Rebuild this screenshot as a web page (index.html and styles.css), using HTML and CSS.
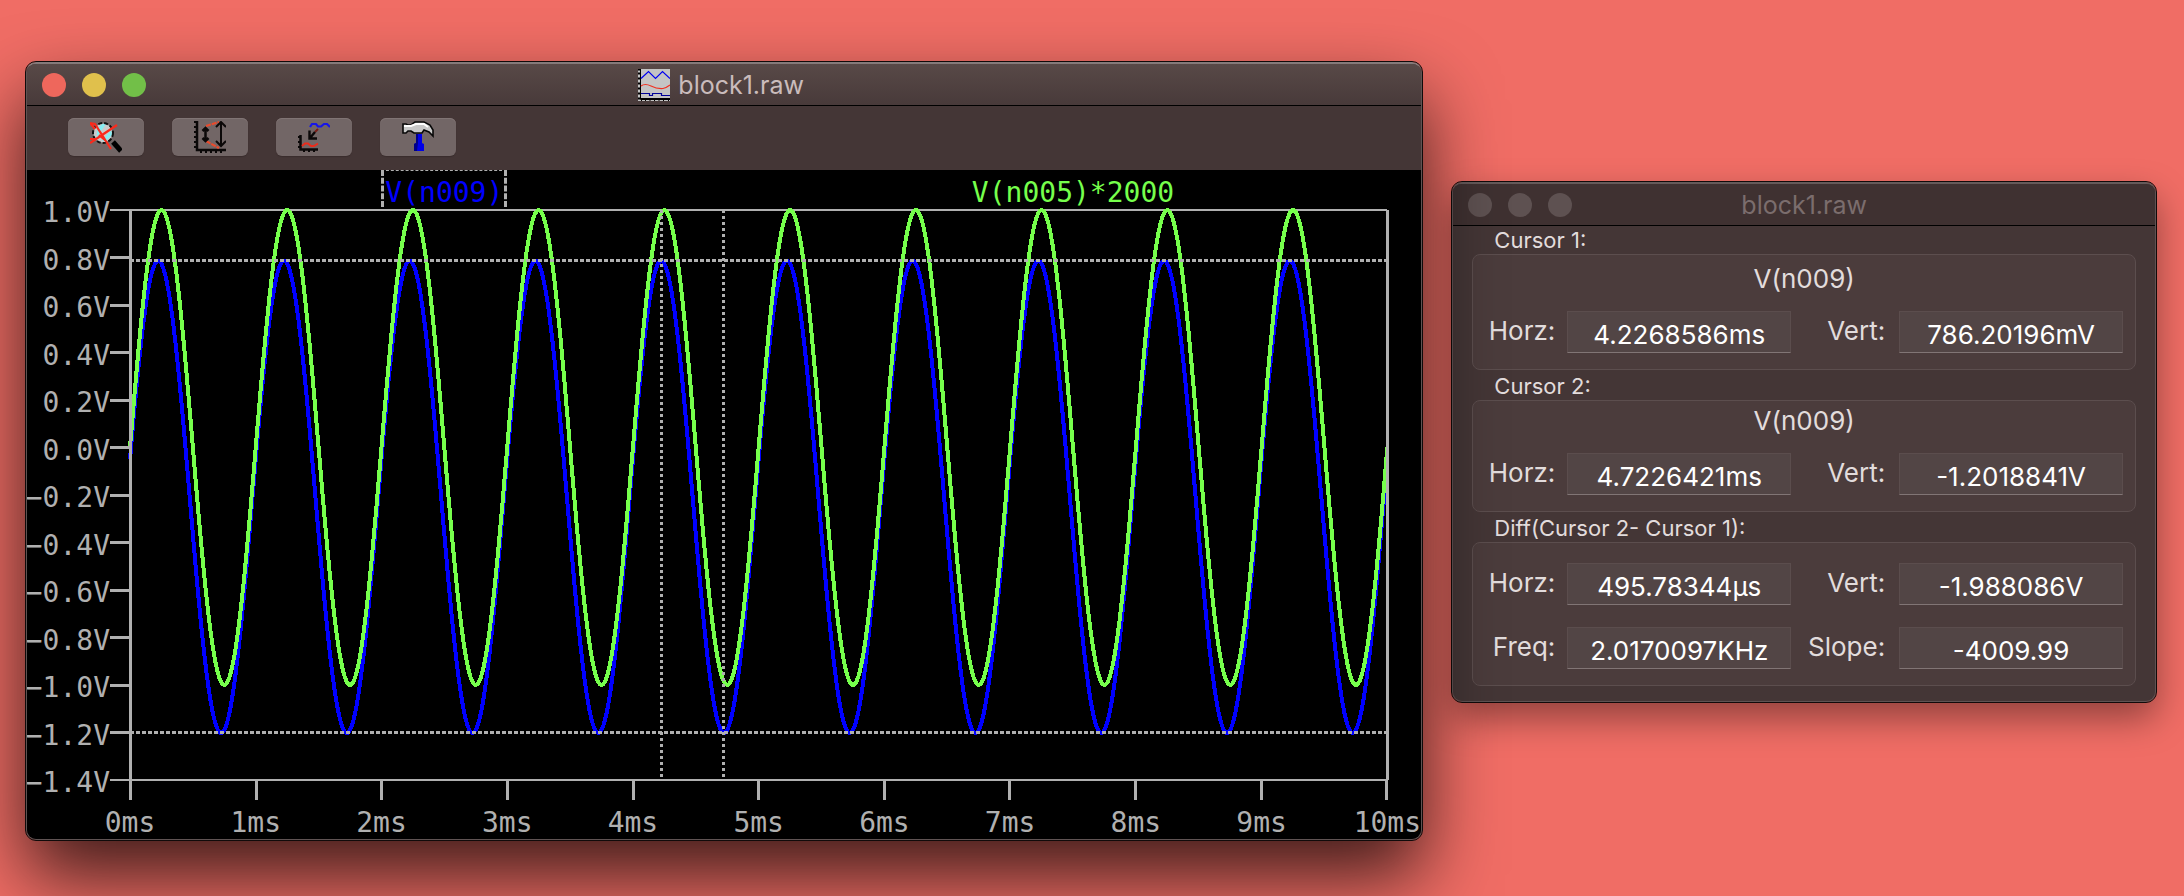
FILE: index.html
```html
<!DOCTYPE html>
<html lang="en">
<head>
<meta charset="utf-8">
<title>block1.raw</title>
<link rel="stylesheet" href="styles.css">
</head>
<body class="desktop">

<main class="window window-active">
  <header class="titlebar">
    <div class="lights">
      <button class="light light-close" aria-label="Close"></button>
      <button class="light light-min" aria-label="Minimize"></button>
      <button class="light light-zoom" aria-label="Zoom"></button>
    </div>
    <h1 class="title">
      <svg class="doc-icon" viewBox="0 0 32 32" aria-hidden="true">
        <rect width="32" height="32" fill="#c4c4c4"/>
        <path d="M2.5 0V30.5H32" fill="none" stroke="#000"/>
        <path d="M0 .5H2M0 4.5H2M0 9.5H2M0 14.5H2M0 19.5H2M0 24.5H2M0 29.5H2" stroke="#000" stroke-width="2"/>
        <path d="M2 29.5H32" stroke="#000"/>
        <path d="M3.500 30V32M7.500 30V32M12 30V32M16.500 30V32M21 30V32M25.500 30V32M30.500 30V32" stroke="#000"/>
        <path d="M3 9.500L10.500 2.500L17.500 9.500L24.500 2.500L32 9.500" fill="none" stroke="#0000f0" stroke-width="1.200"/>
        <path d="M3 17Q7 14 13 17T25 19.500Q28 19 32 16" fill="none" stroke="#f03020" stroke-width="1.200"/>
        <path d="M3 24.500H11.500V26.500H14.500V24.500H23.500V26.500H32" fill="none" stroke="#000098" stroke-width="1.200"/>
      </svg>
      block1.raw
    </h1>
  </header>

  <nav class="toolbar">
    <button class="tool" aria-label="Reset zoom">
      <svg class="tool-icon" viewBox="0 0 32 32" aria-hidden="true">
        <circle cx="13" cy="12" r="9.500" fill="#c9cccc"/>
        <path d="M7 8L12 3H16L7 16ZM12 20L21 9L22 14L16 20Z" fill="#86eef2"/>
        <circle cx="13" cy="12" r="10" fill="none" stroke="#111" stroke-width="2" stroke-dasharray="4 2"/>
        <path d="M23 21L31 30" stroke="#000" stroke-width="5"/>
        <path d="M0 2L5 3L21 28M0 2L5 8M0 22L12 14L27 4M0 18L6 18M9 14L16 20" fill="none" stroke="#fa2a1c" stroke-width="2.200"/>
      </svg>
    </button>
    <button class="tool" aria-label="Autorange">
      <svg class="tool-icon" viewBox="0 0 32 32" aria-hidden="true">
        <path d="M3 0V29H32" fill="none" stroke="#0b0808" stroke-width="2.500"/>
        <path d="M0 1H3M0 6H3M0 11H3M0 16H3M0 21H3M0 26H3M7 29V32M12 29V32M17 29V32M22 29V32M27 29V32" stroke="#0b0808" stroke-width="2"/>
        <path d="M12 5L25 1M12 20L25 27" fill="none" stroke="#ea4a2c" stroke-width="2.200" stroke-dasharray="5 1"/>
        <path d="M11.500 7V20M8.500 10L11.500 7L14.500 10M8.500 17L11.500 20L14.500 17" fill="none" stroke="#0b0808" stroke-width="2.500"/>
        <path d="M27 1V25M22 6L27 1L32 6M22 20L27 25L32 20" fill="none" stroke="#0b0808" stroke-width="2"/>
      </svg>
    </button>
    <button class="tool" aria-label="Add trace">
      <svg class="tool-icon" viewBox="0 0 32 32" aria-hidden="true">
        <path d="M12 6L14 3H18L20 5.500H23L26 3H29L32 6" fill="none" stroke="#1616e8" stroke-width="2.200"/>
        <path d="M20 8L17 11" stroke="#7a1c16" stroke-width="2"/>
        <path d="M17 11L12 17M11.500 9.500V17.500H19" fill="none" stroke="#0b0808" stroke-width="2.400"/>
        <path d="M2.500 14V28.500H20" fill="none" stroke="#0b0808" stroke-width="2.500"/>
        <path d="M0 16H3M0 21H3M0 26H3M6 28V31M11 28V31M16 28V31" stroke="#0b0808" stroke-width="2"/>
        <path d="M4 25L7 22.500H10L13 25H16L20 22.500" fill="none" stroke="#ea2c1c" stroke-width="2"/>
      </svg>
    </button>
    <button class="tool" aria-label="Control panel">
      <svg class="tool-icon" viewBox="0 0 32 32" aria-hidden="true">
        <path d="M1 3H4L6 4H9L13 1H22L28 4L31 9V15L27 11L22 9L20 12H12L9 10H6L4 12H1Z" fill="#c8c8c8" stroke="#080808" stroke-width="1.600"/>
        <path d="M2 5H9L14 3H22L26 6" fill="none" stroke="#fff" stroke-width="2"/>
        <path d="M14 13H20V22L22 23V30H12V23L14 22Z" fill="#0000e8"/>
        <path d="M14 13H16V22L15 30H12V23L14 22Z" fill="#000088"/>
      </svg>
    </button>
  </nav>

  <section class="plot" aria-label="Waveform plot">
    <div class="trace-names">
      <span class="trace-name trace-name-blue">V(n009)</span>
      <span class="trace-name trace-name-green">V(n005)*2000</span>
    </div>
    <ol class="y-labels">
      <li>1.0V</li><li>0.8V</li><li>0.6V</li><li>0.4V</li><li>0.2V</li><li>0.0V</li>
      <li>−0.2V</li><li>−0.4V</li><li>−0.6V</li><li>−0.8V</li><li>−1.0V</li><li>−1.2V</li><li>−1.4V</li>
    </ol>
    <svg class="chart" id="chart" viewBox="0 0 1000 2400" preserveAspectRatio="none" role="img" aria-label="Two sine traces over ten milliseconds">
      <path class="trace trace-blue" id="trace-blue"/>
      <path class="rule" id="rule" d="M0 0H1000M0 2400H1000"/>
      <path class="trace trace-green" id="trace-green"/>
      <path class="axis" id="axis" d="M0 0V2400M1000 0V2400"/>
      <path class="cursor-h" d="M0 214H1000M0 2202H1000"/>
      <path class="cursor-v" d="M422.700 0V2400M472.300 0V2400"/>
    </svg>
    <div class="x-ticks"><i></i><i></i><i></i><i></i><i></i><i></i><i></i><i></i><i></i><i></i><i></i></div>
    <ol class="x-labels">
      <li>0ms</li><li>1ms</li><li>2ms</li><li>3ms</li><li>4ms</li><li>5ms</li><li>6ms</li><li>7ms</li><li>8ms</li><li>9ms</li><li>10ms</li>
    </ol>
  </section>
</main>

<aside class="window window-inactive">
  <header class="titlebar">
    <div class="lights">
      <button class="light" aria-label="Close"></button>
      <button class="light" aria-label="Minimize"></button>
      <button class="light" aria-label="Zoom"></button>
    </div>
    <h2 class="title">block1.raw</h2>
  </header>
  <form class="cursors">
    <h3 class="group-label">Cursor 1:</h3>
    <div class="group group-first">
      <p class="signal">V(n009)</p>
      <div class="fields">
        <label class="label" for="h1">Horz:</label><input class="value" id="h1" value="4.2268586ms">
        <label class="label label-right" for="v1">Vert:</label><input class="value" id="v1" value="786.20196mV">
      </div>
    </div>
    <h3 class="group-label">Cursor 2:</h3>
    <div class="group">
      <p class="signal">V(n009)</p>
      <div class="fields">
        <label class="label" for="h2">Horz:</label><input class="value" id="h2" value="4.7226421ms">
        <label class="label label-right" for="v2">Vert:</label><input class="value" id="v2" value="-1.2018841V">
      </div>
    </div>
    <h3 class="group-label">Diff(Cursor 2- Cursor 1):</h3>
    <div class="group group-diff">
      <div class="fields">
        <label class="label" for="hd">Horz:</label><input class="value" id="hd" value="495.78344µs">
        <label class="label label-right" for="vd">Vert:</label><input class="value" id="vd" value="-1.988086V">
        <label class="label" for="fd">Freq:</label><input class="value" id="fd" value="2.0170097KHz">
        <label class="label label-right" for="sd">Slope:</label><input class="value" id="sd" value="-4009.99">
      </div>
    </div>
  </form>
</aside>

<script src="plot.js"></script>
</body>
</html>
```

FILE: styles.css
```css
* {
  box-sizing: border-box;
}

.desktop {
  display: flex;
  gap: 30px;
  height: 100vh;
  min-height: 760px;
  margin: 0;
  padding: 62px 28px 56px 26px;
  overflow: hidden;
  background: #f06d65;
  color: #e2dcdc;
  font-family: Inter, "Liberation Sans", sans-serif;
  font-size: 26px;
}

.window {
  display: flex;
  flex-direction: column;
  border: 1px solid #5f5353;
  border-top: 2px solid #857a7a;
  border-radius: 10px;
  outline: 1px solid #100a0a;
  overflow: hidden;
}

.window-active {
  position: relative;
  z-index: 1;
  flex: 1397 1 0;
  background: #443636;
  box-shadow: 0 36px 76px rgba(0, 0, 0, 0.75);
}

.window-inactive {
  flex: 703 1 0;
  align-self: flex-start;
  margin-top: 120px;
  border-top-color: #655a5a;
  background: #443636;
  box-shadow: 0 16px 36px rgba(0, 0, 0, 0.4);
}

.titlebar {
  display: grid;
  flex: none;
  grid-template-columns: 1fr auto 1fr;
  align-items: center;
  height: 42px;
  padding: 0 15px;
  border-bottom: 1px solid #000;
  background: linear-gradient(#584947, #483a3a);
}

.window-inactive .titlebar {
  background: #3f3131;
}

.lights {
  display: flex;
  gap: 16px;
}

.light {
  width: 24px;
  height: 24px;
  padding: 0;
  border: 0;
  border-radius: 50%;
  background: #5e5151;
}

.light-close {
  background: #ee675c;
}

.light-min {
  background: #e0c04c;
}

.light-zoom {
  background: #72bf48;
}

.title {
  display: flex;
  align-items: center;
  gap: 8px;
  margin: 0;
  color: #cabcbc;
  font-size: 25px;
  font-weight: 400;
}

.window-active .title {
  padding-right: 6px;
}

.window-inactive .title {
  color: #7b6d6d;
}

.doc-icon {
  width: 32px;
  height: 32px;
}

.toolbar {
  display: flex;
  flex: none;
  gap: 28px;
  height: 64px;
  padding: 12px 41px;
}

.tool {
  width: 76px;
  height: 38px;
  padding: 3px 22px;
  border: 0;
  border-radius: 6px;
  background: #726666;
  box-shadow: 0 1px 1px #3a2d2d, inset 0 1px 0 #807474;
}

.tool-icon {
  display: block;
  width: 32px;
  height: 32px;
}

.plot {
  display: grid;
  flex: 1;
  min-height: 0;
  grid-template-columns: 103px 1fr 34px;
  grid-template-rows: 40px minmax(0, 1fr) 20px 39px;
  background: #000;
  color: #b0b0b0;
  font-family: "DejaVu Sans Mono", "Liberation Mono", monospace;
  font-size: 28px;
  line-height: 32px;
}

.trace-names {
  display: grid;
  grid-column: 2;
  grid-template-columns: 1fr 1fr;
  justify-items: center;
  align-items: start;
}

.trace-name {
  height: 37px;
  padding: 6px 1px 0;
  border: 0 dashed #b0b0b0;
}

.trace-name-blue {
  border-width: 1px 3px 0;
  color: #0000ff;
}

.trace-name-green {
  border-top: 1px solid transparent;
  color: #76ff4c;
}

.y-labels,
.x-labels {
  display: flex;
  justify-content: space-between;
  margin: 0;
  padding: 0;
  list-style: none;
}

.y-labels {
  flex-direction: column;
  grid-row: 2;
  grid-column: 1;
  align-items: flex-end;
  margin: -13px 20px -19px 0;
}

.y-labels li {
  white-space: nowrap;
}

.chart {
  grid-row: 2;
  grid-column: 2;
  width: 100%;
  height: 100%;
  min-height: 0;
  overflow: visible;
  shape-rendering: crispEdges;
}

.chart path {
  fill: none;
  stroke: #b0b0b0;
  vector-effect: non-scaling-stroke;
}

.chart .rule {
  stroke-width: 2px;
}

.chart .axis {
  stroke-width: 3px;
}

.chart .trace {
  stroke-width: 4px;
}

.chart .trace-blue {
  stroke: #0000ff;
}

.chart .trace-green {
  stroke: #76ff4c;
}

.chart .cursor-h {
  stroke-width: 3px;
  stroke-dasharray: 4 2;
}

.chart .cursor-v {
  stroke-width: 3px;
  stroke-dasharray: 3 3;
}

.x-ticks {
  display: flex;
  grid-row: 3;
  grid-column: 2;
  justify-content: space-between;
  margin: 0 -1px;
}

.x-ticks i {
  width: 3px;
  background: #b0b0b0;
}

.x-labels {
  grid-row: 4;
  grid-column: 2;
  margin: 7px 0 0;
}

.x-labels li {
  display: flex;
  justify-content: center;
  width: 0;
}

.cursors {
  display: flex;
  flex-direction: column;
  padding: 0 19px 15px;
}

.group-label {
  margin: 2px 0 0;
  padding-left: 22px;
  font-size: 22px;
  font-weight: 400;
  line-height: 28px;
}

.group-label:first-child {
  margin-top: 0;
}

.group {
  padding: 0 12px 16px 0;
  border: 1px solid #5c4e4e;
  border-radius: 8px;
  background: #4b3c3c;
}

.group-first {
  padding-top: 4px;
}

.group-diff {
  padding-top: 20px;
}

.signal {
  margin: 0;
  padding: 3px 0 15px 12px;
  line-height: 34px;
  text-align: center;
}

.fields {
  display: grid;
  grid-template-columns: 94px 1fr 108px 1fr;
  row-gap: 22px;
}

.label {
  padding-right: 12px;
  line-height: 39px;
  text-align: right;
}

.label-right {
  padding-right: 14px;
}

.value {
  width: 100%;
  min-width: 0;
  height: 42px;
  padding: 4px 0 0;
  border: 1px solid #5b4d4d;
  border-bottom: 1px solid #817575;
  border-radius: 0;
  background: #524545;
  color: #fff;
  font: inherit;
  text-align: center;
}
```

FILE: plot.js
```js
// Chart space: x is 0..1000 for 0..10 ms, y is 0..2400 for 1.0 V down to -1.4 V.
function tracePath(amplitude, offset, lead) {
  const points = [];
  for (let i = 0; i <= 1000; i++) {
    const ms = i / 100;
    const volts = offset + amplitude * Math.sin(2 * Math.PI * (ms + lead));
    points.push(i + " " + ((1 - volts) * 1000).toFixed(1));
  }
  return "M" + points.join("L");
}

document.getElementById("trace-blue").setAttribute("d", tracePath(0.994, -0.2078, 0.0253));
document.getElementById("trace-green").setAttribute("d", tracePath(1, 0, 0));

// Left-hand tick marks, one per 0.2 V; lengths follow the rendered width.
function drawTicks() {
  const chart = document.getElementById("chart");
  const length = (20 * 1000) / chart.clientWidth;
  let d = "M0 0V2400M1000 0V2400";
  for (let y = 200; y < 2400; y += 200) {
    d += "M" + -length + " " + y + "H0";
  }
  document.getElementById("axis").setAttribute("d", d);
  document.getElementById("rule").setAttribute("d", "M" + -length + " 0H1000M" + -length + " 2400H1000");
}

drawTicks();
window.addEventListener("resize", drawTicks);
```
